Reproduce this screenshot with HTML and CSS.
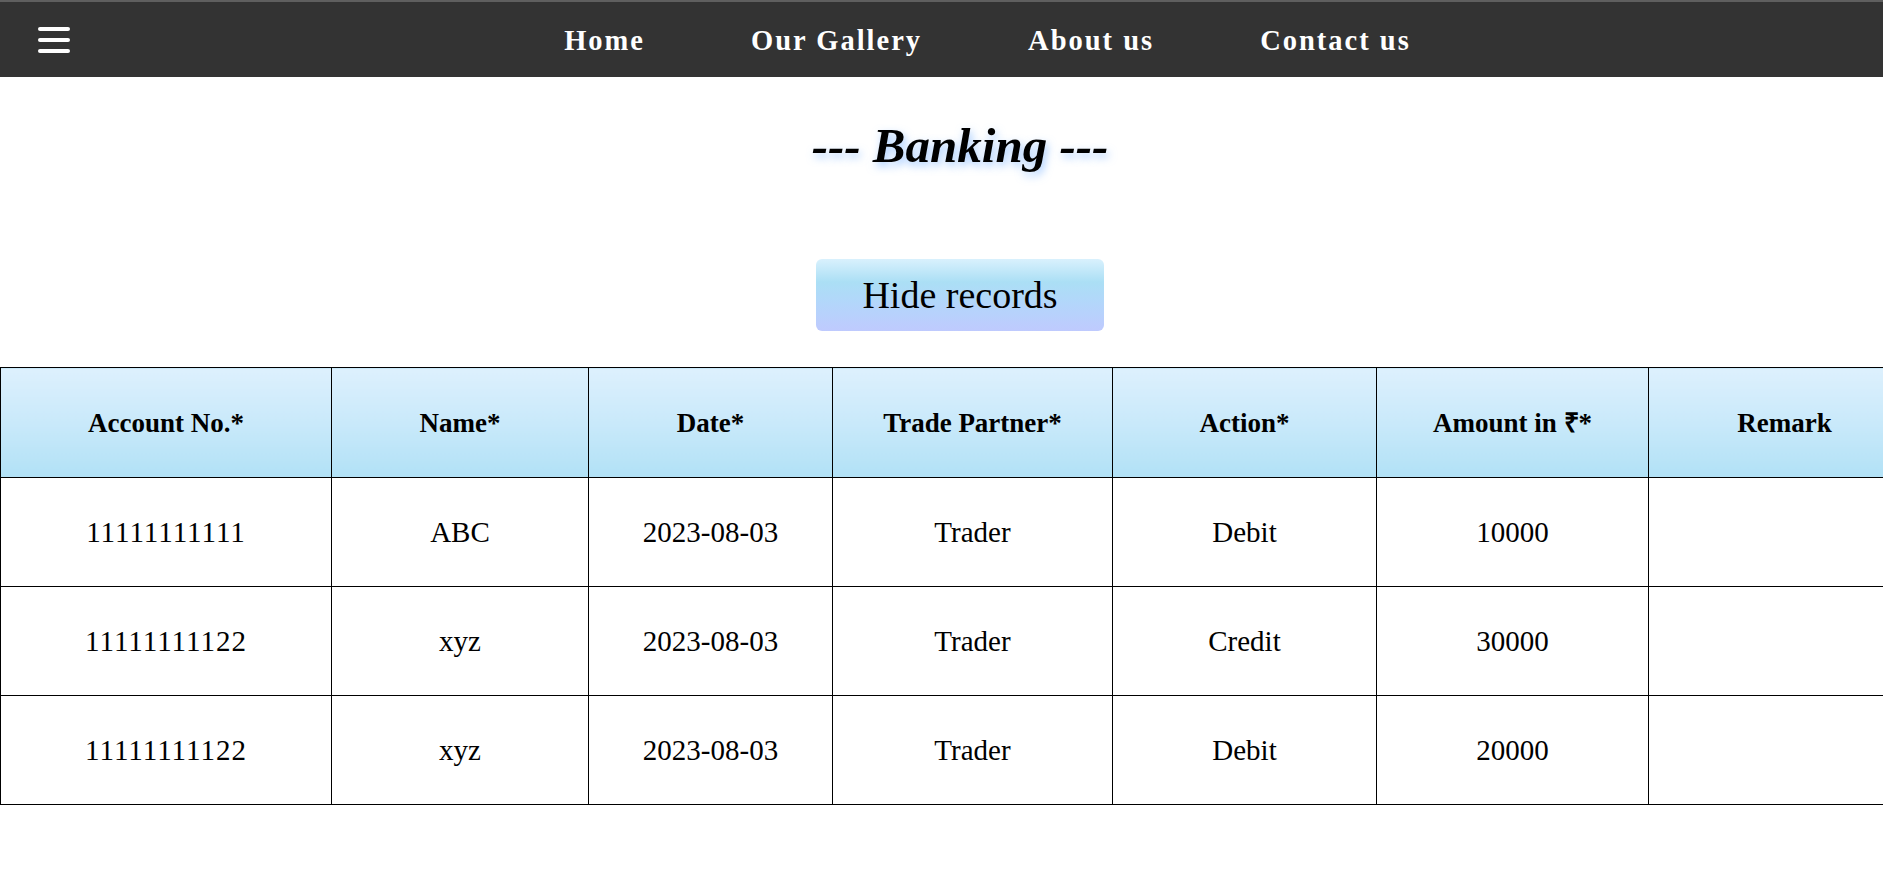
FILE: index.html
```html
<!DOCTYPE html>
<html lang="en">
<head>
<meta charset="utf-8">
<title>Banking</title>
<link rel="stylesheet" href="styles.css">
</head>
<body>
<header class="navbar">
  <button class="menu-btn" aria-label="Menu">
    <span class="bar"></span><span class="bar"></span><span class="bar"></span>
  </button>
  <nav class="nav-links">
    <a href="#">Home</a>
    <a href="#">Our Gallery</a>
    <a href="#">About us</a>
    <a href="#">Contact us</a>
  </nav>
</header>
<main class="content">
  <h1 class="title">--- Banking ---</h1>
  <div class="actions">
    <button class="toggle-btn">Hide records</button>
  </div>
  <table class="records">
    <colgroup>
      <col class="c1"><col class="c2"><col class="c3"><col class="c4"><col class="c5"><col class="c6"><col class="c7">
    </colgroup>
    <thead>
      <tr>
        <th>Account No.*</th>
        <th>Name*</th>
        <th>Date*</th>
        <th>Trade Partner*</th>
        <th>Action*</th>
        <th>Amount in ₹*</th>
        <th>Remark</th>
      </tr>
    </thead>
    <tbody>
      <tr><td class="acct">11111111111</td><td>ABC</td><td>2023-08-03</td><td>Trader</td><td>Debit</td><td>10000</td><td></td></tr>
      <tr><td class="acct">11111111122</td><td>xyz</td><td>2023-08-03</td><td>Trader</td><td>Credit</td><td>30000</td><td></td></tr>
      <tr><td class="acct">11111111122</td><td>xyz</td><td>2023-08-03</td><td>Trader</td><td>Debit</td><td>20000</td><td></td></tr>
    </tbody>
  </table>
</main>
</body>
</html>
```
FILE: styles.css
```css
html {
  overflow-x: hidden;
}
body {
  margin: 0;
  width: 1920px;
  background: #ffffff;
  font-family: "Liberation Serif", "Times New Roman", serif;
  color: #000;
}
.navbar {
  display: flex;
  align-items: center;
  height: 75px;
  border-top: 2px solid #5f5f5f;
  background: #333333;
  padding-left: 38px;
  padding-right: 15px;
}
.menu-btn {
  display: flex;
  flex-direction: column;
  gap: 7px;
  width: 32px;
  padding: 0;
  border: 0;
  background: transparent;
  cursor: pointer;
}
.bar {
  display: block;
  width: 32px;
  height: 4px;
  border-radius: 2px;
  background: #ffffff;
}
.nav-links {
  flex: 1;
  display: flex;
  justify-content: center;
  gap: 106px;
  padding-top: 3px;
}
.nav-links a {
  color: #ffffff;
  text-decoration: none;
  font-weight: bold;
  font-size: 28.5px;
  letter-spacing: 2px;
  line-height: 1;
}
.content {
  display: flex;
  flex-direction: column;
}
.title {
  margin: 40px 0 0;
  text-align: center;
  font-size: 49px;
  line-height: 58px;
  font-style: italic;
  font-weight: bold;
  text-shadow: 2px 4px 8px rgba(90, 160, 255, 0.55);
}
.actions {
  display: flex;
  justify-content: center;
  margin-top: 84px;
}
.toggle-btn {
  width: 288px;
  height: 72px;
  border: 0;
  border-radius: 6px;
  background: linear-gradient(to bottom, #d9f1fd 0%, #abdff5 32%, #b3d6fb 62%, #bfcafe 100%);
  font-family: "Liberation Serif", "Times New Roman", serif;
  font-size: 38px;
  color: #000;
  cursor: pointer;
}
.records {
  margin-top: 36px;
  width: 1920px;
  border-collapse: collapse;
  table-layout: fixed;
}
.c1 { width: 331px; }
.c2 { width: 257px; }
.c3 { width: 244px; }
.c4 { width: 280px; }
.c5 { width: 264px; }
.c6 { width: 272px; }
.c7 { width: 272px; }
.records th,
.records td {
  border: 1px solid #000;
  text-align: center;
  vertical-align: middle;
  padding: 0;
}
.records th {
  height: 109px;
  font-size: 27px;
  line-height: 30px;
  font-weight: bold;
  background: linear-gradient(to bottom, #ddf0fd 0%, #c9e9fa 50%, #b1e1f6 100%);
}
.records td {
  height: 108px;
  font-size: 29px;
  line-height: 32px;
}
.records td.acct {
  letter-spacing: 1px;
}
```
